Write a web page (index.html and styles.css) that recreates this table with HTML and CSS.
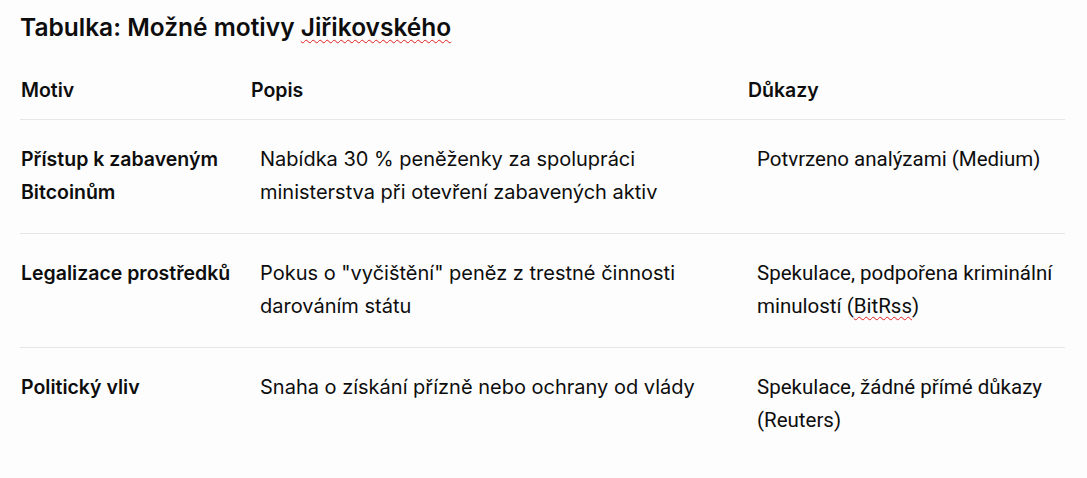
FILE: index.html
```html
<!DOCTYPE html>
<html lang="cs">
<head>
<meta charset="utf-8">
<title>Tabulka</title>
<link rel="stylesheet" href="styles.css">
</head>
<body>
<main class="page">
  <h1 class="title">Tabulka: Možné motivy <span class="spell">Jiřikovského</span></h1>
  <table class="motives">
    <thead>
      <tr>
        <th class="c1">Motiv</th>
        <th class="c2">Popis</th>
        <th class="c3">Důkazy</th>
      </tr>
    </thead>
    <tbody>
      <tr>
        <td class="c1">Přístup k zabaveným Bitcoinům</td>
        <td class="c2">Nabídka 30 % peněženky za spolupráci ministerstva při otevření zabavených aktiv</td>
        <td class="c3">Potvrzeno analýzami (Medium)</td>
      </tr>
      <tr>
        <td class="c1">Legalizace prostředků</td>
        <td class="c2">Pokus o "vyčištění" peněz z trestné činnosti darováním státu</td>
        <td class="c3">Spekulace, podpořena kriminální minulostí (<span class="spell">BitRss</span>)</td>
      </tr>
      <tr class="last">
        <td class="c1">Politický vliv</td>
        <td class="c2">Snaha o získání přízně nebo ochrany od vlády</td>
        <td class="c3">Spekulace, žádné přímé důkazy (Reuters)</td>
      </tr>
    </tbody>
  </table>
</main>
</body>
</html>
```

FILE: styles.css
```css
html, body {
  margin: 0;
  padding: 0;
  background: #fdfdfd;
}
body {
  font-family: Inter, "Noto Sans", sans-serif;
  color: #0d0d0d;
}
.page {
  padding: 10px 22px 0 20px;
}
.title {
  margin: 0;
  font-size: 24.5px;
  font-weight: 600;
  line-height: 34px;
}
.spell {
  text-decoration: underline wavy #e02020;
  text-decoration-thickness: 1px;
  text-underline-offset: 3px;
}
.motives {
  margin-top: 18px;
  width: 1045px;
  border-collapse: collapse;
  table-layout: fixed;
}
.motives th {
  text-align: left;
  font-size: 19.5px;
  font-weight: 600;
  line-height: 33px;
  padding: 12px 0 12px 0;
  border-bottom: 1px solid #e6e6e6;
}
.motives td {
  vertical-align: top;
  font-size: 20px;
  line-height: 33px;
  padding: 23px 20px 24px 9px;
  border-bottom: 1px solid #e6e6e6;
}
.motives tr.last td {
  border-bottom: none;
}
.motives th.c1 { width: 230px; padding-left: 1px; }
.motives th.c2 { width: 497px; }
.motives td.c1 {
  font-weight: 600;
  font-size: 19.5px;
  padding-left: 1px;
  padding-right: 0;
}
.motives td.c3 {
  font-family: Roboto, "Noto Sans", sans-serif;
  font-size: 20.5px;
  padding-right: 0;
}
```
